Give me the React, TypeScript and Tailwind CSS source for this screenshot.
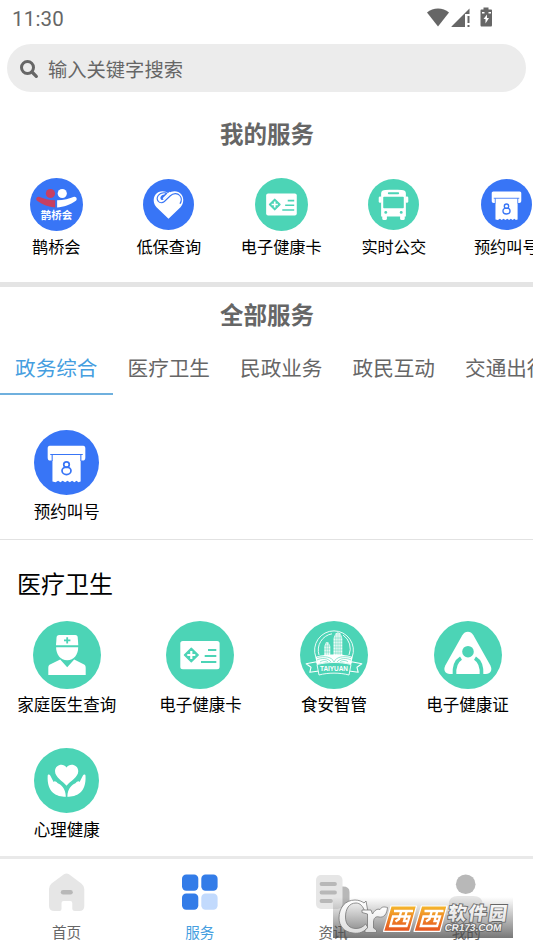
import type { ReactNode } from 'react'
import clsx from 'clsx'

const BLUE = '#3875f6'
const GREEN = '#4cd4b6'

function Disc({ color, children, className }: { color: string; children: ReactNode; className: string }) {
  return (
    <svg viewBox="0 0 68 68" className={clsx('shrink-0', className)}>
      <circle cx="34" cy="34" r="34" fill={color} />
      {children}
    </svg>
  )
}

function BridgeIcon({ className }: { className: string }) {
  return (
    <Disc color={BLUE} className={className}>
      <circle cx="26.2" cy="19.9" r="5.9" fill="#c63f62" />
      <circle cx="41.4" cy="19.9" r="5.9" fill="#fff" />
      <path d="M11.500 24C8 23.500 6.800 28 9.600 29.500C16 34 24 37.300 32.300 37.800V28.500C24.500 28.500 17 26.500 11.500 24Z" fill="#c63f62" />
      <path d="M56.500 24C60 23.500 61.200 28 58.400 29.500C52 34 43 37.300 34.800 37.800V28.500C43 28.500 51 26.500 56.500 24Z" fill="#fff" />
      <text x="34" y="53" textAnchor="middle" fontSize="13.4" fontWeight="700" fill="#fff">
        鹊桥会
      </text>
    </Disc>
  )
}

function HeartIcon({ className }: { className: string }) {
  return (
    <Disc color={BLUE} className={className}>
      <path d="M34 53L18 37.500C13.500 33 13 25 17 20.300C21 15.500 29 14.800 34 19.500C39 14.800 47 15.500 51 20.300C55 25 54.500 33 50 37.500Z" fill="#fff" />
      <path d="M30 18.500C26.500 18 22.500 19 20.300 22C18.300 25 18.800 28 20.500 30C22.500 32.300 26 32.300 28.500 30L36.500 22.300C40 18.800 46 18.300 49 22C51.600 25 51.500 29.300 49.500 32.500" fill="none" stroke={BLUE} strokeWidth="1.5" strokeLinecap="round" />
      <path d="M28.500 20.500C24.500 21 22.500 24 23.500 26.600C24.500 28.500 26.500 28 28 26.700L34 20.800L31 17.500Z" fill={BLUE} />
      <path d="M27 26.500L34 19.500L36.500 18" fill="none" stroke="#fff" strokeWidth="2.2" />
    </Disc>
  )
}

function CardIcon({ className }: { className: string }) {
  return (
    <Disc color={GREEN} className={className}>
      <rect x="14.300" y="20" width="39.300" height="28.200" rx="2.500" fill="#fff" />
      <path d="M25.300 27.200L32.200 34L25.300 40.800L18.500 34Z" fill={GREEN} stroke={GREEN} strokeWidth="1.500" strokeLinejoin="round" />
      <path d="M25.300 30V38M21.300 34H29.300" stroke="#fff" strokeWidth="2.200" />
      <path d="M42 29H50.300M38.700 35H50.300M35 41H50.300" stroke={GREEN} strokeWidth="2.100" />
    </Disc>
  )
}

function BusIcon({ className }: { className: string }) {
  return (
    <Disc color={GREEN} className={className}>
      <path d="M17.500 19C17.500 16 20 14.800 23 14.800C30 14 38 14 45 14.800C48 15 50.500 16 50.500 19V50H17.500Z" fill="#fff" />
      <rect x="14.300" y="23.200" width="4" height="8.500" rx="1.800" fill="#fff" />
      <rect x="49.700" y="23.200" width="4" height="8.500" rx="1.800" fill="#fff" />
      <rect x="19" y="47" width="6.200" height="7.500" rx="2" fill="#fff" />
      <rect x="42.800" y="47" width="6.200" height="7.500" rx="2" fill="#fff" />
      <rect x="26.500" y="17.500" width="15" height="2.800" rx="1.200" fill={GREEN} />
      <rect x="20.300" y="23.500" width="27.400" height="15.500" rx="1" fill={GREEN} />
      <circle cx="23.700" cy="44.500" r="1.900" fill={GREEN} />
      <circle cx="44.300" cy="44.500" r="1.900" fill={GREEN} />
    </Disc>
  )
}

function TicketIcon({ className }: { className: string }) {
  return (
    <Disc color={BLUE} className={className}>
      <path d="M16.500 16.500H51.500C53 16.500 53.700 17.500 53.700 19V29C53.700 31 52.500 32 51 32H48.800V54L46.500 54.700L44.500 53L42.200 54.700L39.800 53L37.500 54.700L35 53L32.600 54.700L30 53L27.600 54.700L25.200 53L22.600 54.700L19.300 54V32H17C15.300 32 14.300 31 14.300 29V19C14.300 17.500 15 16.500 16.500 16.500Z" fill="#fff" />
      <path d="M17 25.700H51M19 25.700V32.500M49 25.700V32.500" fill="none" stroke={BLUE} strokeWidth="1.100" />
      <circle cx="34" cy="36.200" r="2.900" fill="none" stroke={BLUE} strokeWidth="1.800" />
      <ellipse cx="34" cy="42.700" rx="4.700" ry="3.900" fill="none" stroke={BLUE} strokeWidth="1.800" />
    </Disc>
  )
}

function DoctorIcon({ className }: { className: string }) {
  return (
    <Disc color={GREEN} className={className}>
      <path d="M23 24.200L23.600 16C23.800 14.800 25 14 26 14H42.300C43.500 14 44.500 14.800 44.700 16L45.300 24.200Z" fill="#fff" />
      <path d="M34.200 16.200V22.400M31 19.300H37.400" stroke={GREEN} strokeWidth="1.800" />
      <path d="M23.100 26.200H45.200C45.200 33.500 41 39.200 34.200 39.200C27.300 39.200 23.100 33.500 23.100 26.200Z" fill="#fff" />
      <path d="M15.300 54V46.700C15.300 45 16 44 17.500 43.300L27.200 38.500L34.200 46.300L41.200 38.500L50.600 43.300C52 44 52.700 45 52.700 46.700V54Z" fill="#fff" />
    </Disc>
  )
}

function TaiyuanIcon({ className }: { className: string }) {
  return (
    <Disc color={GREEN} className={className}>
      <g fill="none" stroke="#fff" strokeWidth="0.900">
        <path d="M15.800 36A19.400 19.400 0 1 1 52.200 36" />
        <path d="M19 34A16.500 16.500 0 0 1 32 12.800M43 14A16.500 16.500 0 0 1 49 34" />
      </g>
      <path d="M24.300 36V25L26 21.300H28.300L30.300 25V36ZM33.500 36V17L35.500 12.500L38 11.300L40.500 12.500L42.300 17V36Z" fill="#fff" opacity="0.920" />
      <path d="M26.300 22V36M28.300 22V36M24 25H30.500M24 28H30.500M24 31H30.500M35.800 13V36M38 12V36M40.200 13V36M33 17H43M33 20H43M33 23H43M33 26H43M33 29H43M33 32H43" stroke={GREEN} strokeWidth="0.450" />
      <path d="M15.300 36C22 32.500 46 32.500 52.700 36L51 43.300C40 40.300 28 40.300 17 43.300Z" fill="#fff" />
      <path d="M17 39C22 36.500 28 37 31 41M20 41C23 39 26 39 28 41M37 41C40 37 46 36.500 51 39M40 41C42 39 46 39 48 41M17 36.500C25 34.500 32 36 34 41M51 36.500C43 34.500 36 36 34 41" fill="none" stroke={GREEN} strokeWidth="0.600" />
      <path d="M17.500 43L16.500 40.700L6.200 42.800L11 46.300L9.800 51.300L19 50M50.500 43L51.500 40.700L61.800 42.800L57 46.300L58.200 51.300L49 50" fill="none" stroke="#fff" strokeWidth="1.100" strokeLinejoin="round" />
      <path d="M17 43.500C28 40.800 40 40.800 51 43.500L49 54C40 51.500 28 51.500 19 54Z" fill={GREEN} stroke="#fff" strokeWidth="0.900" />
      <text x="34" y="50.200" textAnchor="middle" fontFamily="Liberation Sans, sans-serif" fontSize="6.600" fontWeight="700" fill="#fff" textLength="28" lengthAdjust="spacingAndGlyphs">
        TAIYUAN
      </text>
    </Disc>
  )
}

function CertIcon({ className }: { className: string }) {
  return (
    <Disc color={GREEN} className={className}>
      <path d="M28.300 14.200C31 9.700 36.700 9.700 39.400 14.200L56.400 44.500C58.700 49 56.500 53 51.800 53H15.900C11.200 53 9 49 11.300 44.500Z" fill="#fff" />
      <path d="M20.500 54C20 46 21.500 40.500 27 37.200M47.500 54C48 46 46.500 40.500 41 37.200" fill="none" stroke={GREEN} strokeWidth="3.700" />
      <circle cx="34" cy="30.700" r="5.800" fill={GREEN} />
    </Disc>
  )
}

function CareIcon({ className }: { className: string }) {
  return (
    <Disc color={GREEN} className={className}>
      <path d="M34 39.500C30 34.500 22 30.500 22 24.300C22 17.500 30.500 15.300 34 20.300C37.500 15.300 46.300 17.500 46.300 24.300C46.300 30.500 38 34.500 34 39.500Z" fill="#fff" />
      <path d="M14.300 29C14.300 27.300 16.300 27.300 17 28.700L20.500 35.500C21.500 34.200 23.500 35.300 24.500 36.500C28 38 33.300 42 33.300 51C24 51 13.300 47 14.300 29Z" fill="#fff" />
      <path d="M53.900 29C53.900 27.300 51.900 27.300 51.200 28.700L47.700 35.500C46.700 34.200 44.700 35.300 43.700 36.500C40.200 38 34.900 42 34.900 51C44.200 51 54.900 47 53.900 29Z" fill="#fff" />
    </Disc>
  )
}

const myServices = [
  { name: '鹊桥会', Icon: BridgeIcon, size: 'size-[53px]' },
  { name: '低保查询', Icon: HeartIcon, size: 'size-[51px]' },
  { name: '电子健康卡', Icon: CardIcon, size: 'size-[53px]' },
  { name: '实时公交', Icon: BusIcon, size: 'size-[51px]' },
  { name: '预约叫号', Icon: TicketIcon, size: 'size-[51px]' },
]

const medical = [
  { name: '家庭医生查询', Icon: DoctorIcon, size: 'size-[68px]' },
  { name: '电子健康卡', Icon: CardIcon, size: 'size-[68px]' },
  { name: '食安智管', Icon: TaiyuanIcon, size: 'size-[68px]' },
  { name: '电子健康证', Icon: CertIcon, size: 'size-[68px]' },
  { name: '心理健康', Icon: CareIcon, size: 'size-[65px]' },
]

const tabs = ['政务综合', '医疗卫生', '民政业务', '政民互动', '交通出行']

function StatusBar() {
  return (
    <div className="flex h-[44px] items-start justify-between pt-[6px] pl-[12px] pr-[40px] text-[#666]">
      <span className="font-['Roboto'] text-[20.5px] leading-[26px] tracking-[0.2px]">11:30</span>
      <svg viewBox="0 0 66 22" className="mt-px h-[22px] w-[66px]" fill="#666">
        <path d="M0 5.500C6 0.300 16 0.300 22 5.500L11 19.500Z" />
        <path d="M24.500 20V19.500L42.500 1.500V7H38V20Z" />
        <path d="M40.500 9H42.500V16H40.500ZM40.500 18H42.500V20H40.500Z" />
        <path d="M56.500 0.500H61.500V2.500H64C64.700 2.500 65 3 65 3.500V18C65 18.800 64.700 19.500 64 19.500H54.500C53.800 19.500 53.500 18.800 53.500 18V3.500C53.500 3 53.800 2.500 54.500 2.500H56.500Z" />
        <path d="M60 7.500L56.500 12H58.500V16.500L62 11H60Z" fill="#fff" />
        <path d="M55 5H57.500V6.500H55ZM61.500 5H64V6.500H61.500Z" fill="#fff" />
      </svg>
    </div>
  )
}

function SearchBox() {
  return (
    <div className="mx-[7px] flex h-[48px] items-center rounded-full bg-[#ececec] pt-px pl-[12px]">
      <svg viewBox="0 0 20 20" className="size-[20px]" fill="none" stroke="#666">
        <circle cx="8.500" cy="8.500" r="6" strokeWidth="3" />
        <path d="M13 13L17.300 17.300" strokeWidth="3.300" strokeLinecap="round" />
      </svg>
      <span className="ml-[9px] text-[19.3px] leading-[28px] text-[#666]">输入关键字搜索</span>
    </div>
  )
}

function ServiceGrid({ items }: { items: typeof medical }) {
  return (
    <div className="grid grid-cols-[repeat(4,133.600px)] auto-rows-[125px]">
      {items.map(({ name, Icon, size }) => (
        <div key={name} className="flex flex-col items-center">
          <div className="flex h-[68px] items-center">
            <Icon className={size} />
          </div>
          <span className="mt-[3px] whitespace-nowrap text-[16.500px] leading-[24px]">{name}</span>
        </div>
      ))}
    </div>
  )
}

function TabItem({ label, active, children }: { label: string; active?: boolean; children: ReactNode }) {
  return (
    <div className="flex flex-1 flex-col items-center">
      {children}
      <span className={clsx('mt-[9px] text-[14.600px] leading-[22px]', active ? 'text-[#459ee0]' : 'text-[#666]')}>{label}</span>
    </div>
  )
}

function BottomBar() {
  return (
    <div className="flex h-[92px] border-t-[3px] border-[#e9e9e9] bg-white pt-[13px]">
      <TabItem label="首页">
        <svg viewBox="0 0 40 40" className="size-[40px]">
          <path d="M17 2.300Q19.500 0.700 22 2.300L34.300 11.500Q37.300 14 37.300 17V34Q37.300 39 32.300 39H28Q25.300 39 25.300 37V31Q25.300 29 23.300 29H16.500Q14.500 29 14.500 31V37Q14.500 39 12.500 39H7.500Q2 39 2 34V17Q2 14 4.500 11.500Z" fill="#e6e6e6" />
          <rect x="13.800" y="18" width="12" height="4.600" rx="2.300" fill="#b8b8b8" />
        </svg>
      </TabItem>
      <TabItem label="服务" active>
        <svg viewBox="0 0 40 40" className="size-[40px]" fill="#337ce8">
          <rect x="2" y="2.500" width="16.300" height="16.300" rx="4.200" />
          <rect x="21.300" y="2.500" width="16.300" height="16.300" rx="4.200" />
          <rect x="2" y="21.500" width="16.300" height="16.300" rx="4.200" />
          <rect x="21.300" y="21.500" width="16.300" height="16.300" rx="4.200" fill="#c2dafd" />
        </svg>
      </TabItem>
      <TabItem label="资讯">
        <svg viewBox="0 0 40 40" className="size-[40px]">
          <path d="M27 14.500H30Q36.500 14.500 36.500 20V32Q36.500 36 32 36H26Z" fill="#b8b8b8" />
          <rect x="3" y="3" width="26.500" height="34" rx="5" fill="#e6e6e6" />
          <path d="M8.500 12H22M8.500 20.500H22M8.500 29H18" stroke="#b8b8b8" strokeWidth="3.800" strokeLinecap="round" />
        </svg>
      </TabItem>
      <TabItem label="我的">
        <svg viewBox="0 0 40 40" className="size-[40px]">
          <circle cx="19.700" cy="12.300" r="9.800" fill="#b8b8b8" />
          <path d="M3 36V32Q3 24 12 24H27Q36.500 24 36.500 32V36Z" fill="#e6e6e6" />
        </svg>
      </TabItem>
    </div>
  )
}

function Watermark() {
  return (
    <svg viewBox="0 0 180 41" className="absolute top-[897px] left-[333px] h-[41px] w-[180px] overflow-visible">
      <defs>
        <linearGradient id="shade" x1="0" y1="0" x2="0" y2="1">
          <stop offset="0" stopColor="#555" stopOpacity="0" />
          <stop offset="1" stopColor="#4a4a4a" stopOpacity="0.750" />
        </linearGradient>
        <linearGradient id="orange" x1="0" y1="0" x2="0" y2="1">
          <stop offset="0" stopColor="#f5b72c" />
          <stop offset="1" stopColor="#e65320" />
        </linearGradient>
        <linearGradient id="silver" x1="0" y1="0" x2="0" y2="1">
          <stop offset="0" stopColor="#fff" />
          <stop offset="1" stopColor="#dedede" />
        </linearGradient>
      </defs>
      <rect width="180" height="41" fill="url(#shade)" />
      <path d="M33 4L35 15H32C30 9 27 6 23 6C16 6 12.500 12 12.500 20C12.500 28 17 31.500 23 31.500C27 31.500 30 30 32.500 27L35 30.500C31 35 26 37 20 36C11 35 6 29 6 21C6 11 12 3 22 3C26 3 29 4.500 31 6Z" fill="url(#silver)" stroke="#777" strokeWidth="0.800" />
      <path d="M29 13H38L39.500 17C42 13 44 11.500 47 12.500C49 9 52 10 54.500 10.500C54 17 51 21 46 20C43 19 40.500 21 40.500 25V31L43.500 33V35.500H32V33L34.500 31V17L29 15.500Z" fill="url(#silver)" stroke="#777" strokeWidth="0.800" />
      {[0, 30.5].map((dx) => (
        <g key={dx} transform={`translate(${dx} 0)`}>
          <path d="M58 9H83.500L76.500 34.300H50.500Z" fill="url(#orange)" stroke="#fff" strokeWidth="1.200" strokeLinejoin="round" />
          <path d="M61 14H80M60 19.500H76.500L73.500 29H57.300ZM68.300 14L66 22L62.500 24.500M73.800 14L71 24H74" fill="none" stroke="#fff" strokeWidth="2.300" />
        </g>
      ))}
      <g transform="skewX(-8)" fill="url(#silver)" stroke="#666" strokeWidth="1.800" paintOrder="stroke" fontWeight="800">
        <text x="117.500" y="23.500" fontSize="18.500" textLength="59">
          软件园
        </text>
        <text x="116" y="34.500" fontSize="10" fontFamily="Liberation Sans, sans-serif" textLength="57" lengthAdjust="spacingAndGlyphs">
          CR173.COM
        </text>
      </g>
    </svg>
  )
}

export default function App() {
  return (
    <div className="relative flex h-[948px] w-[533px] flex-col overflow-hidden bg-white font-['Noto_Sans_CJK_SC',sans-serif] text-black">
      <StatusBar />
      <SearchBox />

      <section className="h-[195px] border-b-[5px] border-[#e4e4e4] pt-[24px]">
        <h2 className="pl-px text-center text-[23.500px] leading-[34px] font-bold text-[#666]">我的服务</h2>
        <div className="mt-[27px] flex">
          {myServices.map(({ name, Icon, size }) => (
            <div key={name} className="flex w-[112.500px] shrink-0 flex-col items-center">
              <div className="flex h-[54px] items-center">
                <Icon className={size} />
              </div>
              <span className="mt-[3px] text-[16.200px] leading-[24px]">{name}</span>
            </div>
          ))}
        </div>
      </section>

      <section className="h-[108px] pt-[10px]">
        <h2 className="pl-px text-center text-[23.500px] leading-[34px] font-bold text-[#666]">全部服务</h2>
        <div className="mt-[10px] flex">
          {tabs.map((tab, i) => (
            <div
              key={tab}
              className={clsx(
                'flex h-[54px] w-[112.500px] shrink-0 items-center justify-center border-b-2 text-[20.600px]',
                i === 0 ? 'border-[#6fb0de] text-[#459ee0]' : 'border-transparent text-[#666]',
              )}
            >
              {tab}
            </div>
          ))}
        </div>
      </section>

      <section className="h-[145px] border-b border-[#e2e2e2] pt-[33px]">
        <ServiceGrid items={[{ name: '预约叫号', Icon: TicketIcon, size: 'size-[65px]' }]} />
      </section>

      <section className="h-[316px] pt-[25px]">
        <h3 className="pl-[17px] text-[24px] leading-[36px]">医疗卫生</h3>
        <div className="mt-[20px]">
          <ServiceGrid items={medical} />
        </div>
      </section>

      <BottomBar />
      <Watermark />
    </div>
  )
}
